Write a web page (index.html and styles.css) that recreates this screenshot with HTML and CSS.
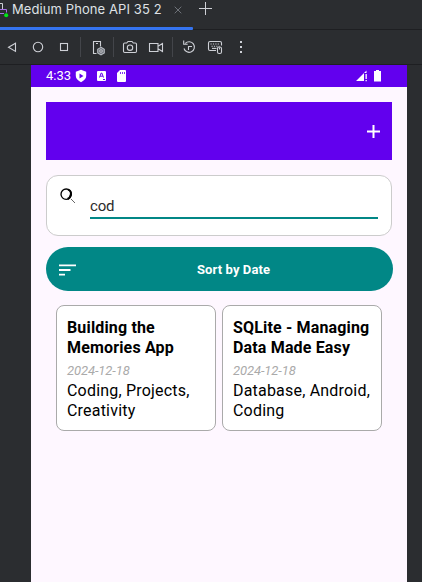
FILE: index.html
```html
<!DOCTYPE html>
<html lang="en">
<head>
<meta charset="utf-8">
<title>Medium Phone API 35 2</title>
<link rel="stylesheet" href="styles.css">
</head>
<body>
<header class="tabs">
  <svg class="device" width="9" height="20" viewBox="0 0 9 20" fill="none"><path d="M0 3.500h2.500v5.500" stroke="#ced0d6"/><path d="M0 9.500h6.500v3M0 13.500h4" stroke="#a571e6"/><circle cx="6.200" cy="15.200" r="2" fill="#00e818"/></svg>
  <span class="tab-title">Medium Phone API 35 2</span>
  <svg class="close" width="8" height="8" viewBox="0 0 8 8"><path d="M.7.7l6.600 6.600M7.300.7L.7 7.300" stroke="#6f737a"/></svg>
  <svg class="new-tab" width="14" height="14" viewBox="0 0 14 14"><path d="M6.500 0v13M0 6.500h13" stroke="#ced0d6"/></svg>
  <div class="indicator"></div>
</header>
<nav class="toolbar">
  <svg width="257" height="34" viewBox="0 30 257 34" fill="none" stroke="#ced0d6" stroke-width="1.100">
    <path d="M15.500 43.200v8.200L8.500 47.300z"/>
    <circle cx="38" cy="47" r="4.700"/>
    <rect x="60.500" y="43.500" width="7" height="7"/>
    <path d="M80.500 37v20M113.500 37v20M172.500 37v20" stroke="#43454a" stroke-width="1"/>
    <path d="M96.500 53.500h-3v-12h7v5M96 43.500h2"/>
    <path d="M101 47.300l3.300 1.900v3.700L101 54.800l-3.300-1.900v-3.700z" fill="#6f737a" stroke="#b4b8bf"/><circle cx="101" cy="51" r="1.200" fill="#2b2d30"/>
    <path d="M124.700 43h2l1.300-1.500h4l1.300 1.500h2q1.200 0 1.200 1.200v7.100q0 1.200-1.200 1.200h-10.600q-1.200 0-1.200-1.200v-7.100q0-1.200 1.200-1.200z"/><circle cx="130" cy="47.700" r="2.700"/>
    <path d="M149.500 43.500h8.500v8h-8.500zM158 46.300l4.500-2.800v8l-4.500-2.800"/>
    <path d="M185.300 43.300A5.300 5.300 0 1 1 184 48.500M183.700 40.500v3.800h4M188.500 50v-3.500h3.500"/>
    <path d="M216 50.500h-6q-1.500 0-1.500-1.500v-6q0-1.500 1.500-1.500h10q1.500 0 1.500 1.500v2.500"/><path d="M210.500 44h9M211.500 46.300h8" stroke-dasharray="1.200 1.200"/><path d="M212 48.400h4.500"/>
    <rect x="217.500" y="47" width="4" height="6.500" rx="1.600"/><path d="M219.500 47.500v2"/>
    <g fill="#ced0d6" stroke="none"><rect x="240" y="41" width="2" height="2"/><rect x="240" y="46" width="2" height="2"/><rect x="240" y="51" width="2" height="2"/></g>
  </svg>
</nav>
<main class="phone">
  <div class="status">
    <span class="time">4:33</span>
    <svg class="notices" width="52" height="14" viewBox="0 0 52 14"><path d="M6 .8l5.200 2v4q0 4-5.200 6.400-5.200-2.400-5.200-6.400v-4z" fill="#fff"/><path d="M4.500 4.500v5L8.500 7z" fill="#6200ee"/><rect x="22" y="2" width="9" height="10" rx="1" fill="#fff"/><path d="M24.500 8.500l1.700-4.500h.6l1.700 4.500M25.200 7.200h2.600M28 10.500h2" stroke="#6200ee" stroke-width="1" fill="none"/><path d="M45 1h5q1 0 1 1v10q0 1-1 1h-7q-1 0-1-1V4z" fill="#fff"/><path d="M45.500 3v2M47.500 3v2M49.500 3v2" stroke="#6200ee" stroke-width=".8"/></svg>
    <svg class="signals" width="26" height="13" viewBox="0 0 26 13" fill="#fff"><path d="M0 12L10.500 1.500V4H8v8zM9.500 5h1.300v5H9.500zM9.500 11h1.300v1.200H9.500zM18 2h2V1h3v1h2v10.500h-7z"/></svg>
  </div>
  <div class="appbar"><svg width="13" height="13" viewBox="0 0 13 13"><path d="M6.500 0v13M0 6.500h13" stroke="#fff" stroke-width="2"/></svg></div>
  <div class="search">
    <svg width="16" height="16" viewBox="0 0 16 16" fill="none"><circle cx="6.200" cy="6.200" r="5.200" stroke="#000" stroke-width="1.300"/><path d="M8 1.700Q11.500 3 10.800 6.500T7.500 11" stroke="#000" stroke-width="1.900"/><path d="M11 11l4 4" stroke="#555" stroke-width=".9"/></svg>
    <div class="field">cod</div>
  </div>
  <button class="sort"><svg width="17" height="12" viewBox="0 0 17 12"><path d="M0 1.300h17M0 6h11.500M0 10.700h6" stroke="#fff" stroke-width="1.800"/></svg>Sort by Date</button>
  <section class="cards">
    <article class="card"><h2>Building the Memories App</h2><time>2024-12-18</time><p>Coding, Projects, Creativity</p></article>
    <article class="card"><h2>SQLite - Managing Data Made Easy</h2><time>2024-12-18</time><p>Database, Android, Coding</p></article>
  </section>
</main>
</body>
</html>
```
FILE: styles.css
```css
* { box-sizing: border-box; }
body { margin: 0; width: 422px; height: 582px; overflow: hidden; background: #2b2d30; font-family: Roboto, "Liberation Sans", sans-serif; }
svg { display: block; flex: none; }
.tabs { position: relative; height: 30px; display: flex; align-items: flex-start; border-bottom: 1px solid #1e1f22; }
.tab-title { margin: 1px 0 0 3px; width: 150px; font: 13px/17px Inter, sans-serif; letter-spacing: 0.09px; color: #dfe1e5; white-space: nowrap; }
.close { margin: 6px 0 0 12px; }
.new-tab { margin: 2px 0 0 17px; }
.indicator { position: absolute; left: 0; top: 27px; width: 193px; height: 3px; background: #3574f0; border-radius: 0 1px 1px 0; }
.toolbar { height: 35px; border-bottom: 1px solid #1e1f22; }
.phone { margin-left: 31px; width: 376px; height: 517px; background: #fef7ff; }
.status { height: 22px; display: flex; background: #6200ee; color: #fff; }
.time { margin-left: 15px; width: 25px; font-size: 13px; line-height: 22px; white-space: nowrap; }
.notices { margin: 4px 0 0 4px; }
.signals { margin: 4px 25px 0 auto; }
.appbar { margin: 15px 15px 0; height: 58px; display: flex; justify-content: flex-end; align-items: center; padding-right: 12px; background: #6200ee; }
.search { margin: 15px 15px 0; height: 61px; display: flex; padding: 12px 13px; background: #fff; border: 1px solid #ccc; border-radius: 12px; }
.field { flex: 1; height: 31px; margin-left: 14px; padding-top: 8px; border-bottom: 2px solid #018786; font-size: 15px; line-height: 20px; letter-spacing: -0.2px; color: #2b2b2b; }
.sort { display: flex; align-items: center; width: 347px; height: 44px; margin: 11px 14px 0 15px; padding: 1px 0 0 13px; border: 0; border-radius: 22px; background: #018786; color: #fff; font: bold 13px/18px Roboto, sans-serif; letter-spacing: 0.1px; }
.sort svg { margin-right: 121px; }
.cards { display: grid; grid-template-columns: 160px 160px; gap: 6px; margin: 14px 25px 0; }
.card { height: 126px; padding: 12px 0 0 10px; background: #fff; border: 1px solid #aaa; border-radius: 8px; color: #000; }
.card h2, .card p { margin: 0; width: 146px; font-size: 16px; line-height: 19.5px; letter-spacing: 0.16px; }
.card h2 { font-weight: bold; }
.card p { font-weight: normal; letter-spacing: 0.2px; }
.card time { display: block; margin: 6px 0 3px; font-size: 13px; line-height: 15px; font-style: italic; letter-spacing: -0.1px; color: #aaa; }
```
